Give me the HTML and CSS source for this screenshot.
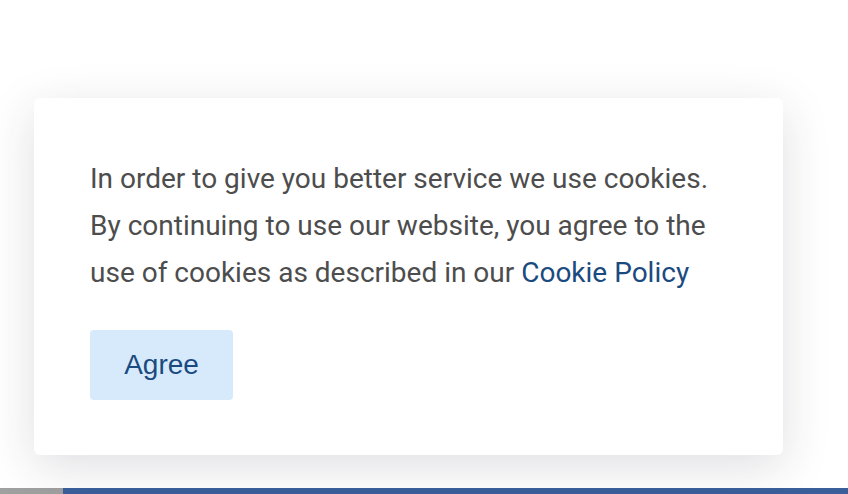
FILE: index.html
```html
<!DOCTYPE html>
<html>
<head>
<meta charset="utf-8">
<link rel="stylesheet" href="styles.css">
</head>
<body>
<div class="page">
  <div class="card">
    <p class="msg">In order to give you better service we use cookies. By continuing to use our website, you agree to the use of cookies as described in our <a class="link" href="#">Cookie Policy</a></p>
    <button class="agree">Agree</button>
  </div>
</div>
<div class="strip"><div class="strip-gray"></div><div class="strip-blue"></div></div>
</body>
</html>
```
FILE: styles.css
```css
html, body { margin: 0; padding: 0; }
body { width: 848px; height: 494px; overflow: hidden; background: #fff; font-family: Roboto, "Noto Sans", sans-serif; }
.page {
  height: 488px;
  background: #fff;
  border-bottom-right-radius: 8px;
  padding: 98px 65px 0 34px;
  box-sizing: border-box;
  position: relative;
  z-index: 1;
}
.card {
  width: 749px;
  height: 357px;
  box-sizing: border-box;
  background: #fff;
  border-radius: 6px;
  box-shadow: 0 12px 48px rgba(40, 40, 60, 0.15);
  padding: 57px 56px 0 56px;
}
.msg {
  margin: 0;
  font-size: 28px;
  line-height: 47px;
  color: #4d4d4d;
  width: 630px;
}
.link { color: #1b4a80; text-decoration: none; }
.agree {
  display: block;
  margin-top: 34px;
  width: 143px;
  height: 70px;
  border: 0;
  border-radius: 4px;
  background: #d6eafc;
  color: #1b4a80;
  font-family: "Liberation Sans", Arial, sans-serif;
  font-size: 28px;
  padding: 0;
}
.strip { display: flex; height: 6px; }
.strip-gray { width: 63px; background: #a0a0a0; }
.strip-blue { flex: 1; background: #3a5f9b; }
```
